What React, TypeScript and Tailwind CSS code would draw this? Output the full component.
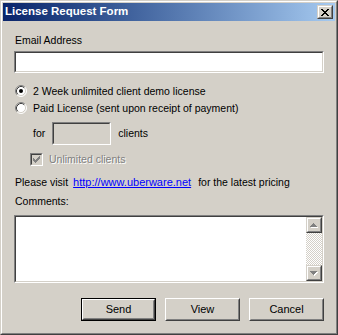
import React from 'react';

const font = { fontFamily: '"Liberation Sans", Arial, sans-serif' };

// classic sunken 2px border (text fields, check boxes)
const Sunken = ({ children, className = '', inner = 'bg-white' }: { children?: React.ReactNode; className?: string; inner?: string }) => (
  <div className={`border border-t-[#808080] border-l-[#808080] border-r-white border-b-white ${className}`}>
    <div className={`h-full w-full border border-t-[#404040] border-l-[#404040] border-r-[#d4d0c8] border-b-[#d4d0c8] ${inner}`}>
      {children}
    </div>
  </div>
);

// push button
const Button = ({ label, isDefault }: { label: string; isDefault?: boolean }) => {
  const body = (
    <div className="h-full border border-t-white border-l-white border-r-[#404040] border-b-[#404040]">
      <div className="h-full border border-t-[#d4d0c8] border-l-[#d4d0c8] border-r-[#808080] border-b-[#808080] flex items-center justify-center text-[11px] text-black">
        {label}
      </div>
    </div>
  );
  return (
    <button type="button" className={`w-[75px] h-[23px] p-0 bg-[#d4d0c8] ${isDefault ? 'border border-black' : ''}`}>
      {body}
    </button>
  );
};

// small raised box (scroll arrows, caption button)
const SmallRaised = ({ children, className = '' }: { children?: React.ReactNode; className?: string }) => (
  <div className={`bg-[#d4d0c8] border border-t-[#d4d0c8] border-l-[#d4d0c8] border-r-[#404040] border-b-[#404040] ${className}`}>
    <div className="h-full border border-t-white border-l-white border-r-[#808080] border-b-[#808080] flex items-center justify-center">
      {children}
    </div>
  </div>
);

const Radio = ({ checked }: { checked?: boolean }) => (
  <svg width="12" height="12" viewBox="0 0 12 12" className="shrink-0">
    <circle cx="6" cy="6" r="5" fill="#fff" />
    <path d="M2.11 9.89A5.5 5.5 0 0 1 9.89 2.11" fill="none" stroke="#808080" />
    <path d="M9.89 2.11A5.5 5.5 0 0 1 2.11 9.89" fill="none" stroke="#fff" />
    <path d="M2.82 9.18A4.5 4.5 0 0 1 9.18 2.82" fill="none" stroke="#404040" />
    <path d="M9.18 2.82A4.5 4.5 0 0 1 2.82 9.18" fill="none" stroke="#d4d0c8" />
    {checked && <circle cx="6" cy="6" r="2" fill="#000" />}
  </svg>
);

const checkTops = [2, 3, 4, 3, 2, 1, 0];

const CheckMark = ({ color }: { color: string }) => (
  <svg width="7" height="7" viewBox="0 0 7 7" shapeRendering="crispEdges">
    {checkTops.map((t, i) => (
      <rect key={i} x={i} y={t} width="1" height="3" fill={color} />
    ))}
  </svg>
);

const Arrow = ({ down }: { down?: boolean }) => {
  const rows = [[3, 1], [2, 3], [1, 5], [0, 7]];
  const r = down ? [...rows].reverse() : rows;
  return (
    <svg width="8" height="5" viewBox="0 0 8 5" shapeRendering="crispEdges">
      {r.map(([x, w], y) => (
        <rect key={'s' + y} x={x + 1} y={y + 1} width={w} height="1" fill="#fff" />
      ))}
      {r.map(([x, w], y) => (
        <rect key={y} x={x} y={y} width={w} height="1" fill="#808080" />
      ))}
    </svg>
  );
};

const closeRows = [
  [0, 1, 6, 7],
  [1, 2, 5, 6],
  [2, 3, 4, 5],
  [3, 4],
  [2, 3, 4, 5],
  [1, 2, 5, 6],
  [0, 1, 6, 7],
];

const CloseGlyph = () => (
  <svg width="8" height="7" viewBox="0 0 8 7" shapeRendering="crispEdges">
    {closeRows.map((xs, y) => xs.map((x) => <rect key={`${x}-${y}`} x={x} y={y} width="1" height="1" fill="#000" />))}
  </svg>
);

export default function App() {
  return (
    <div style={font} className="w-[338px] h-[335px] bg-[#d4d0c8] border border-t-[#d4d0c8] border-l-[#d4d0c8] border-r-[#404040] border-b-[#404040] select-none">
      <div className="h-full border border-t-white border-l-white border-r-[#808080] border-b-[#808080] p-px flex flex-col">
        {/* Title bar */}
        <div className="h-[18px] shrink-0 flex items-center justify-between bg-gradient-to-r from-[#0a246a] to-[#a6caf0]">
          <span className="pl-[2px] text-[11.5px] font-bold text-white leading-none">License Request Form</span>
          <SmallRaised className="w-[16px] h-[14px] mr-[2px]">
            <CloseGlyph />
          </SmallRaised>
        </div>

        {/* Body */}
        <div className="flex flex-col px-[11px] text-[10.5px] text-black leading-[13px]">
          <div className="mt-[13px] h-[13px] pl-px">Email Address</div>
          <Sunken className="mt-[4px] h-[22px]" />

          <div className="mt-[10px] h-[16px] flex items-center pl-px gap-[6px]">
            <Radio checked />
            <span>2 Week unlimited client demo license</span>
          </div>
          <div className="mt-px h-[16px] flex items-center pl-px gap-[6px]">
            <Radio />
            <span>Paid License (sent upon receipt of payment)</span>
          </div>

          <div className="mt-[6px] h-[23px] flex items-center pl-[19px]">
            <span>for</span>
            <Sunken className="ml-[7px] w-[59px] h-[23px]" inner="bg-[#d4d0c8]" />
            <span className="ml-[7px]">clients</span>
          </div>

          <div className="mt-[8px] h-[13px] flex items-center pl-[16px] gap-[6px]">
            <Sunken className="w-[13px] h-[13px] shrink-0" inner="bg-[#d4d0c8] flex items-center justify-center">
              <CheckMark color="#808080" />
            </Sunken>
            <span className="text-[#808080] [text-shadow:1px_1px_0_#fff]">Unlimited clients</span>
          </div>

          <div className="mt-[10px] h-[13px] flex items-center pl-px">
            <span>Please visit</span>
            <span className="ml-[5px] text-[11px] text-[#0000ff] underline">http://www.uberware.net</span>
            <span className="ml-[7px]">for the latest pricing</span>
          </div>

          <div className="mt-[6px] h-[13px] pl-px">Comments:</div>

          <Sunken className="mt-[7px] h-[68px]" inner="bg-white flex justify-end">
            <div className="w-[16px] h-full flex flex-col bg-[repeating-conic-gradient(#d4d0c8_0_25%,#fff_0_50%)] bg-[length:2px_2px]">
              <SmallRaised className="w-[16px] h-[16px]">
                <Arrow />
              </SmallRaised>
              <div className="flex-1" />
              <SmallRaised className="w-[16px] h-[16px]">
                <Arrow down />
              </SmallRaised>
            </div>
          </Sunken>

          <div className="mt-[15px] flex justify-end gap-[9px]">
            <Button label="Send" isDefault />
            <Button label="View" />
            <Button label="Cancel" />
          </div>
        </div>
      </div>
    </div>
  );
}
